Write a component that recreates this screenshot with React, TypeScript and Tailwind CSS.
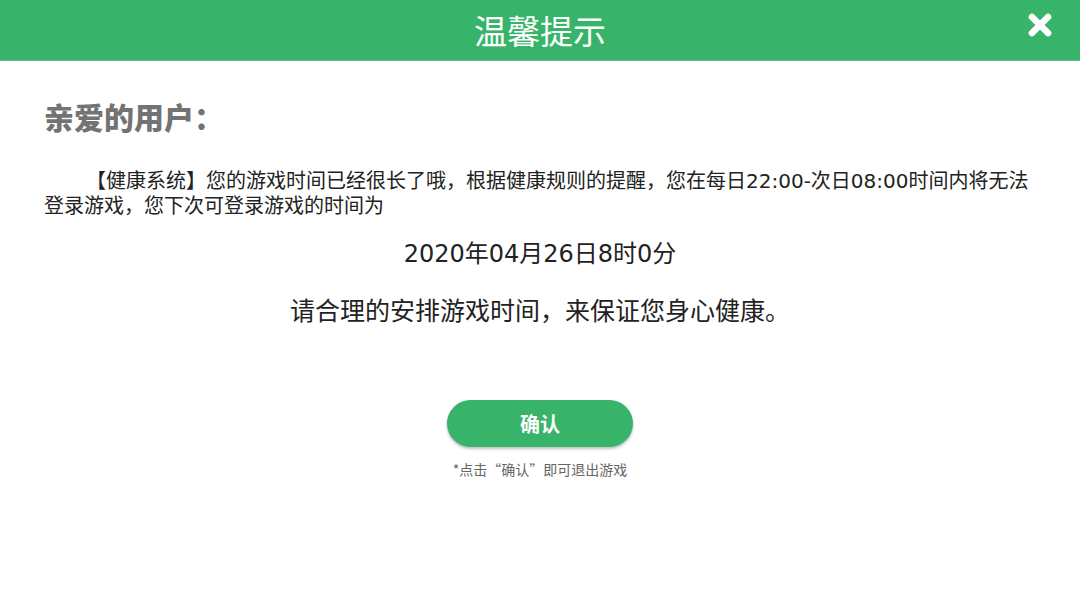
import { X } from "lucide-react";

const body = { fontFamily: '"DejaVu Sans", "Noto Sans CJK SC", sans-serif' };
const cjk = { fontFamily: '"Noto Sans CJK SC", "Noto Sans", sans-serif' };

export default function App() {
  return (
    <div className="flex h-[608px] w-[1080px] flex-col bg-white text-[#222]" style={cjk}>
      <header className="relative flex h-[61px] shrink-0 items-center justify-center border-b border-[#5cc185] bg-[#37b46a]">
        <h1 className="text-[33px] font-normal leading-none text-white">温馨提示</h1>
        <button type="button" className="absolute right-[24px] top-[9px] text-white">
          <X size={32} strokeWidth={5} />
        </button>
      </header>

      <main className="flex flex-col px-[44px]">
        <div className="mt-[36px] text-[30px] font-black leading-[38px] text-[#737373]">
          亲爱的用户：
        </div>

        <p className="mt-[34px] indent-[42px] text-[20px] leading-[25px]" style={body}>
          【健康系统】您的游戏时间已经很长了哦，根据健康规则的提醒，您在每日22:00-次日08:00时间内将无法
          <br />
          登录游戏，您下次可登录游戏的时间为
        </p>

        <div className="mt-[20px] text-center text-[24px] leading-[30px]" style={body}>
          2020年04月26日8时0分
        </div>

        <div className="mt-[25px] text-center text-[25px] leading-[30px]">
          请合理的安排游戏时间，来保证您身心健康。
        </div>

        <div className="mt-[76px] flex flex-col items-center">
          <button
            type="button"
            className="flex h-[47px] w-[186px] items-center justify-center rounded-full bg-[#37b46a] text-[20px] font-bold text-white shadow-[0_2px_3px_rgba(0,0,0,0.25)]"
          >
            确认
          </button>
          <div className="mt-[13px] text-[14px] leading-[18px] text-[#666]">
            *点击“确认”即可退出游戏
          </div>
        </div>
      </main>
    </div>
  );
}
